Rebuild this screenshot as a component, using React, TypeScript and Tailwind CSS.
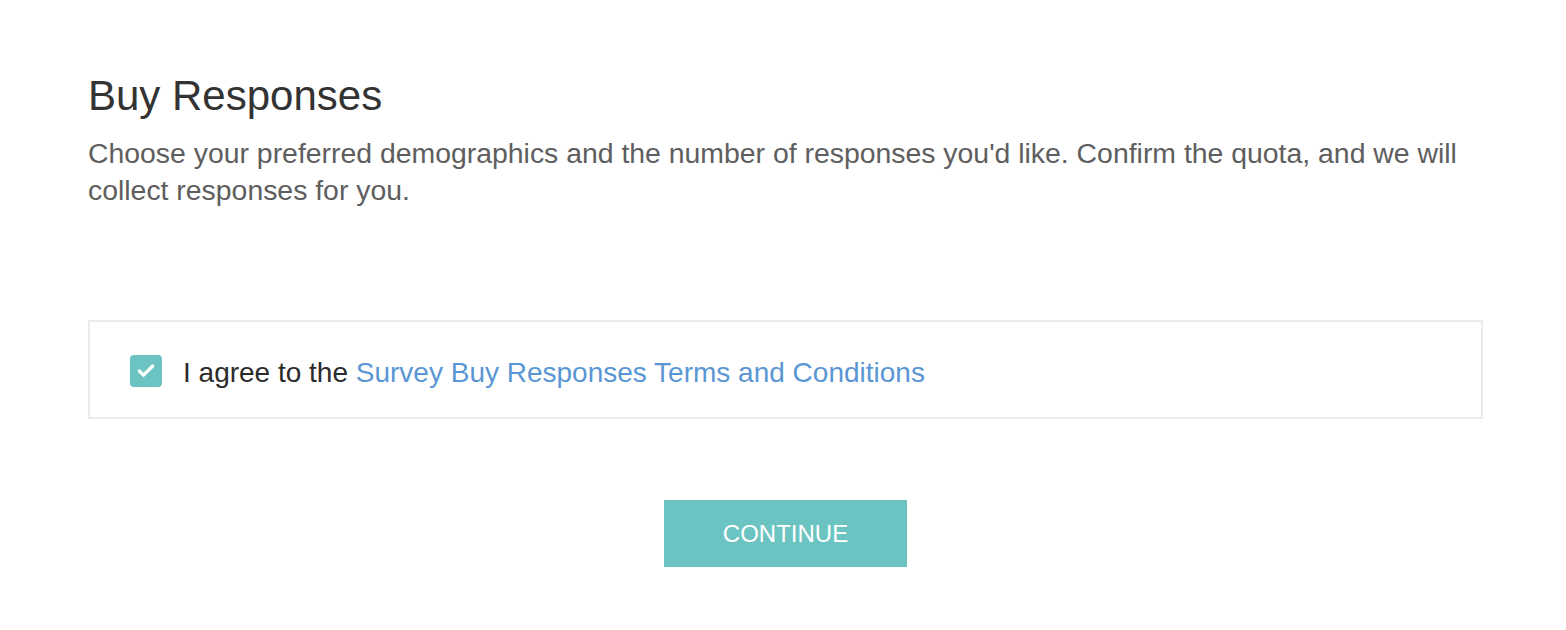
import { Check } from "lucide-react";

const App = () => {
  return (
    <div className="min-h-[630px] w-full bg-white font-['Liberation_Sans',Arial,sans-serif]">
      <div className="pl-[88px] pr-[83px] pt-[72px]">
        <h1 className="text-[42px] leading-[48px] text-[#333333]">Buy Responses</h1>
        <p className="mt-[15px] text-[28.4px] leading-[37px] text-[#5e5e5e]">
          Choose your preferred demographics and the number of responses you'd like. Confirm the quota, and we will
          collect responses for you.
        </p>

        <div className="mt-[111px] flex h-[99px] items-center border-2 border-[#ebebeb] pl-[40px] pt-[3px]">
          <span className="flex h-[32px] w-[32px] items-center justify-center rounded-[4px] bg-[#6cc4c2]">
            <Check className="h-[20px] w-[20px] text-white" strokeWidth={4} />
          </span>
          <span className="ml-[21px] pt-[3px] text-[28px] leading-none text-[#2b2b2b]">
            I agree to the{" "}
            <a className="text-[#5b96d4]" href="#">
              Survey Buy Responses Terms and Conditions
            </a>
          </span>
        </div>

        <div className="mt-[81px] flex justify-center">
          <button className="h-[67px] w-[243px] bg-[#6cc4c2] text-[24px] text-white">CONTINUE</button>
        </div>
      </div>
    </div>
  );
};

export default App;
